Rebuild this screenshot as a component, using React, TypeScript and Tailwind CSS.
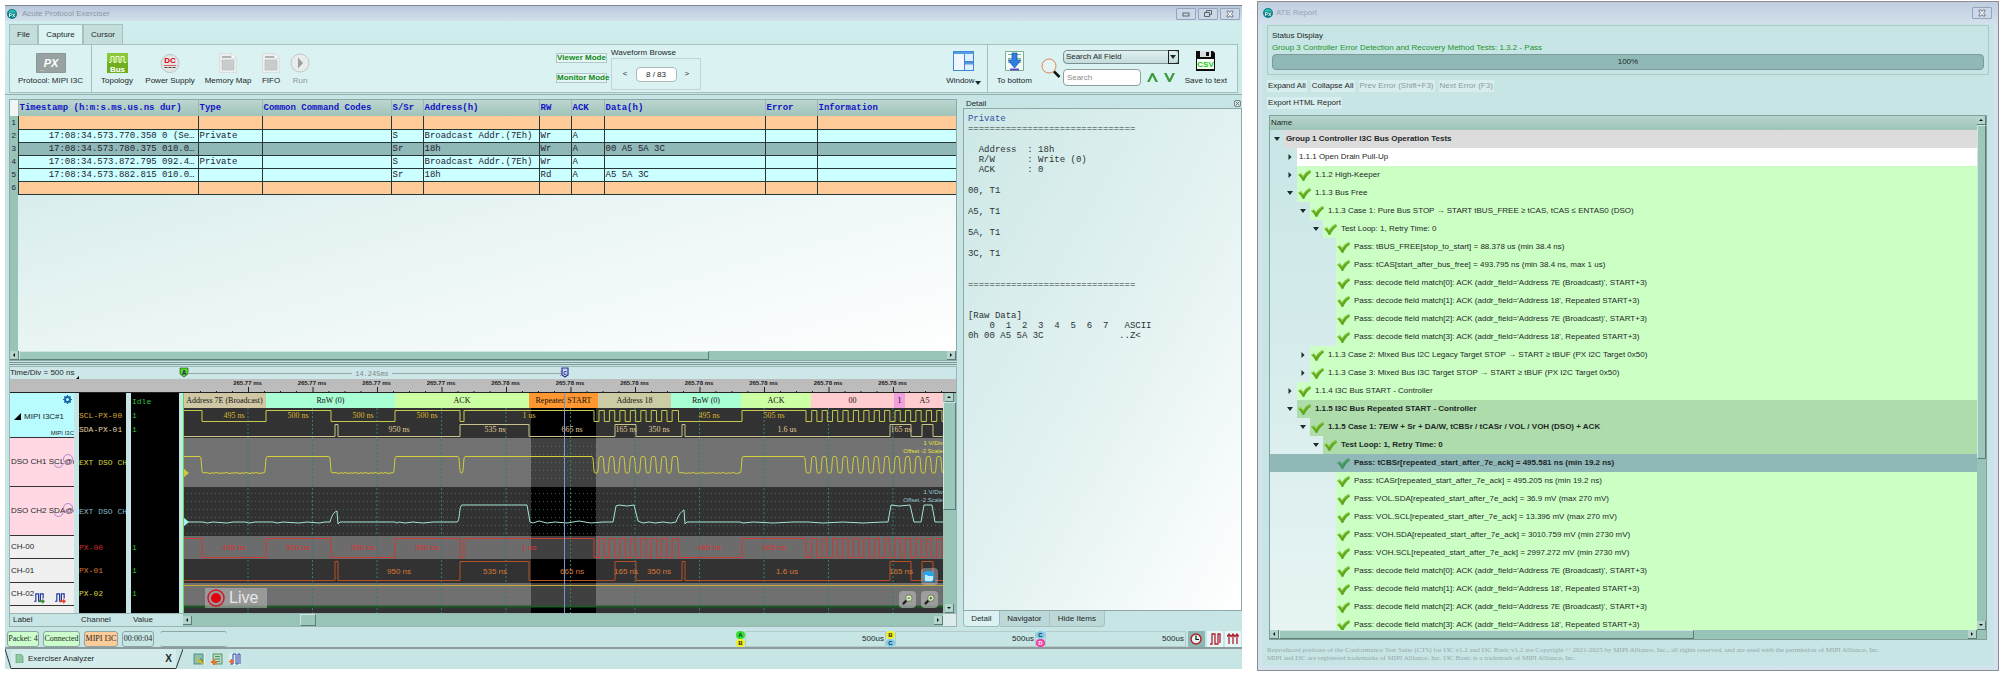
import React, { useState } from "react";

type Edge = [number, number];

const times = (n: number) => Array.from({ length: n }, (_, i) => i);

/* ---------- packet list ---------- */

const columns = [
  { name: "Timestamp (h:m:s.ms.us.ns dur)", width: "w-[180px]" },
  { name: "Type", width: "w-16" },
  { name: "Common Command Codes", width: "w-[129px]" },
  { name: "S/Sr", width: "w-8" },
  { name: "Address(h)", width: "w-[116px]" },
  { name: "RW", width: "w-8" },
  { name: "ACK", width: "w-[33px]" },
  { name: "Data(h)", width: "w-[161px]" },
  { name: "Error", width: "w-[52px]" },
  { name: "Information", width: "" },
];

const packets = [
  { bg: "bg-[#ffcc99]", cells: ["", "", "", "", "", "", "", "", "", ""] },
  {
    bg: "bg-[#ccffff]",
    cells: ["17:08:34.573.770.350 0 (Se…", "Private", "", "S", "Broadcast Addr.(7Eh)", "Wr", "A", "", "", ""],
  },
  {
    bg: "bg-[#90b8b6]",
    cells: ["17:08:34.573.780.375 010.0…", "", "", "Sr", "18h", "Wr", "A", "00 A5 5A 3C", "", ""],
  },
  {
    bg: "bg-[#ccffff]",
    cells: ["17:08:34.573.872.795 092.4…", "Private", "", "S", "Broadcast Addr.(7Eh)", "Wr", "A", "", "", ""],
  },
  {
    bg: "bg-[#ccffff]",
    cells: ["17:08:34.573.882.815 010.0…", "", "", "Sr", "18h", "Rd", "A", "A5 5A 3C", "", ""],
  },
  { bg: "bg-[#ffcc99]", cells: ["", "", "", "", "", "", "", "", "", ""] },
];

/* ---------- test report ---------- */

const indents = ["pl-0", "pl-[13px]", "pl-[26px]", "pl-[39px]", "pl-[52px]"];

type TestRow = {
  level: number;
  text: string;
  open?: boolean;
  kind?: "group" | "plain" | "bold" | "selected";
};

const decodeRows: TestRow[] = [
  { level: 4, text: "Pass: decode field match[0]: ACK (addr_field='Address 7E (Broadcast)', START+3)" },
  { level: 4, text: "Pass: decode field match[1]: ACK (addr_field='Address 18', Repeated START+3)" },
  { level: 4, text: "Pass: decode field match[2]: ACK (addr_field='Address 7E (Broadcast)', START+3)" },
  { level: 4, text: "Pass: decode field match[3]: ACK (addr_field='Address 18', Repeated START+3)" },
];

const tests: TestRow[] = [
  { level: 0, open: true, kind: "group", text: "Group 1 Controller I3C Bus Operation Tests" },
  { level: 1, open: false, kind: "plain", text: "1.1.1 Open Drain Pull-Up" },
  { level: 1, open: false, text: "1.1.2 High-Keeper" },
  { level: 1, open: true, text: "1.1.3 Bus Free" },
  { level: 2, open: true, text: "1.1.3 Case 1: Pure Bus STOP → START tBUS_FREE ≥ tCAS, tCAS ≤ ENTAS0 (DSO)" },
  { level: 3, open: true, text: "Test Loop: 1, Retry Time: 0" },
  { level: 4, text: "Pass: tBUS_FREE[stop_to_start] = 88.378 us (min 38.4 ns)" },
  { level: 4, text: "Pass: tCAS[start_after_bus_free] = 493.795 ns (min 38.4 ns, max 1 us)" },
  ...decodeRows,
  { level: 2, open: false, text: "1.1.3 Case 2: Mixed Bus I2C Legacy Target STOP → START ≥ tBUF (PX I2C Target 0x50)" },
  { level: 2, open: false, text: "1.1.3 Case 3: Mixed Bus I3C Target STOP → START ≥ tBUF (PX I2C Target 0x50)" },
  { level: 1, open: false, text: "1.1.4 I3C Bus START - Controller" },
  { level: 1, open: true, kind: "bold", text: "1.1.5 I3C Bus Repeated START - Controller" },
  { level: 2, open: true, kind: "bold", text: "1.1.5 Case 1: 7E/W + Sr + DA/W, tCBSr / tCASr / VOL / VOH (DSO) + ACK" },
  { level: 3, open: true, kind: "bold", text: "Test Loop: 1, Retry Time: 0" },
  { level: 4, kind: "selected", text: "Pass: tCBSr[repeated_start_after_7e_ack] = 495.581 ns (min 19.2 ns)" },
  { level: 4, text: "Pass: tCASr[repeated_start_after_7e_ack] = 495.205 ns (min 19.2 ns)" },
  { level: 4, text: "Pass: VOL.SDA[repeated_start_after_7e_ack] = 36.9 mV (max 270 mV)" },
  { level: 4, text: "Pass: VOL.SCL[repeated_start_after_7e_ack] = 13.396 mV (max 270 mV)" },
  { level: 4, text: "Pass: VOH.SDA[repeated_start_after_7e_ack] = 3010.759 mV (min 2730 mV)" },
  { level: 4, text: "Pass: VOH.SCL[repeated_start_after_7e_ack] = 2997.272 mV (min 2730 mV)" },
  ...decodeRows,
];

/* ---------- waveform data, x in pixels from cursor A ---------- */

const scl: Edge[] = [
  [0, 1], [19, 0], [83, 1], [148, 0], [212, 1], [277, 0], [281, 1], [411, 0],
  ...times(8).flatMap((i): Edge[] => [
    [416 + i * 10.45, 1],
    [i === 7 ? 495.5 : 421.3 + i * 10.45, 0],
  ]),
  [559, 1], [623, 0],
  ...times(13).flatMap((i): Edge[] => [
    [628.7 + i * 10.42, 1],
    [633.9 + i * 10.42, 0],
  ]),
];

const sda: Edge[] = [
  [0, 0], [152, 1], [155, 0], [277, 1], [346, 0], [432, 1], [453, 0],
  [499, 1], [502, 0], [707, 1], [728, 0], [739, 1], [750, 0],
];

const segments = [
  { x: 0, w: 83, text: "Address 7E (Broadcast)", fill: "#d0c8a4" },
  { x: 83, w: 129, text: "RnW (0)", fill: "#a8ffd4" },
  { x: 212, w: 134, text: "ACK", fill: "#ccffa4" },
  { x: 346, w: 69, text: "Repeated START", fill: "#ff9830" },
  { x: 415, w: 73, text: "Address 18", fill: "#cccca4" },
  { x: 488, w: 70, text: "RnW (0)", fill: "#a8ffd4" },
  { x: 558, w: 70, text: "ACK", fill: "#ccffa4" },
  { x: 628, w: 83, text: "00", fill: "#ffcccf" },
  { x: 711, w: 11, text: "1", fill: "#f0a0dc" },
  { x: 722, w: 39, text: "A5", fill: "#ffcccf" },
];

const sclLabels: [number, string][] = [
  [51, "495 ns"], [115, "500 ns"], [180, "500 ns"], [244, "500 ns"],
  [346, "1 us"], [526, "495 ns"], [591, "505 ns"],
];

const sdaLabels: [number, string][] = [
  [216, "950 ns"], [312, "535 ns"], [389, "665 ns"], [443, "165 ns"],
  [476, "350 ns"], [604, "1.6 us"], [718, "165 ns"],
];

const ticks = ["265.77 ms", "265.77 ms", "265.77 ms", "265.77 ms", "265.78 ms", "265.78 ms",
  "265.78 ms", "265.78 ms", "265.78 ms", "265.78 ms", "265.78 ms"];

function digital(edges: Edge[], hi: number, lo: number) {
  const y = (v: number) => (v ? hi : lo);
  return `M0 ${y(edges[0][1])}` + edges.slice(1).map(([x, v]) => `H${x}V${y(v)}`).join("") + "H2000";
}

function analog(edges: Edge[], hi: number, lo: number) {
  const y = (v: number) => (v ? hi : lo);
  let d = `M0 ${y(edges[0][1])}`;
  edges.forEach(([x, v], i) => {
    const end = edges[i + 1] ? edges[i + 1][0] - 2 : 2000;
    if (i > 0) {
      d += `L${x - 2} ${y(edges[i - 1][1])}C${x} ${y(edges[i - 1][1])} ${x - 1} ${y(v)} ${x + 1} ${y(v)}`;
    }
    // a little ripple on the low level
    if (!v) {
      for (let n = x + 4, k = 0; n < Math.min(end, 770); n += 2, k++) {
        d += `L${n} ${lo + (((k * 7) % 5) - 2) * 0.25}`;
      }
    }
  });
  return d + "H2000";
}

const sdaAnalog =
  "M0 129L20 129L24 130L30 129L44 130L50 129L62 129L66 130L72 129L90 129L94 130L100 129L116 130L124 129L136 130L142 129" +
  "L147 129C149 122 151 119 154 118L155 131L157 129H212L214 130L216 129L222 130L230 129L240 130L250 129H274" +
  "C277 129 276 112 279 112H344L347 129L350 130L356 128L364 130L372 129L384 130L396 128L408 130L420 129H430" +
  "L433 113L436 112L444 113L451 112L455 128L460 130L466 129L472 130L480 129L488 130L493 129C496 121 498 119 501 117" +
  "L502 131L504 129H557L560 130L570 129L590 130L610 129L625 129L640 130L660 129L680 130L700 129H705L708 112L716 113L727 112" +
  "L731 129L738 129L741 112L749 112L752 129H2000";

function Waveform() {
  return (
    <svg className="block h-[220px] w-full bg-[#323232]" fontSize="8" textAnchor="middle">
      <rect y="45" width="100%" height="49" fill="#727272" />
      <rect y="143" width="100%" height="23" fill="#6c6c6c" />
      <rect y="190" width="100%" height="23" fill="#707070" />
      <g>
        <rect x="348" y="15" width="65" height="205" fill="#000" />
        <rect x="348" y="45" width="65" height="49" fill="#404040" />
        <rect x="348" y="143" width="65" height="23" fill="#404040" />
        <rect x="348" y="190" width="65" height="23" fill="#404040" />
      </g>
      {/* grid */}
      <g stroke="#4e7a78" strokeDasharray="1 3">
        {[53, 61, 69, 77, 85].map((y) => (
          <line key={y} x1="0" x2="100%" y1={y + 0.5} y2={y + 0.5} strokeOpacity=".7" />
        ))}
        {[100, 108, 116, 124, 132, 140].map((y) => (
          <line key={y} x1="0" x2="100%" y1={y + 0.5} y2={y + 0.5} strokeOpacity=".7" />
        ))}
      </g>
      <g stroke="#2c7f78" strokeDasharray="2 2">
        {ticks.map((_, i) => (
          <line key={i} x1={65 + i * 64.5} x2={65 + i * 64.5} y1="15" y2="220" />
        ))}
      </g>
      {/* decoded fields */}
      <rect width="100%" height="15" fill="#ffcccf" />
      {segments.map((s) => (
        <g key={s.x} fontFamily="Liberation Serif, serif">
          <rect x={s.x} width={s.w} height="15" fill={s.fill} />
          <path d={`M${s.x + s.w + 0.5} 0v3M${s.x + s.w + 0.5} 11v4`} stroke="#111" />
          <text x={s.x + s.w / 2} y="10" fill="#111">
            {s.text}
          </text>
        </g>
      ))}
      <g fill="none" strokeWidth="1">
        <path d={digital(scl, 17.5, 28.5)} stroke="#c8c850" />
        <path d={digital(sda, 31.5, 43.5)} stroke="#c8c48c" />
        <path d={analog(scl, 63.5, 80)} stroke="#d4d03c" />
        <path d={sdaAnalog} stroke="#a4e4d8" />
        <path d={digital(scl, 145.5, 164.5)} stroke="#cc3a34" />
        <path d={digital(sda, 168.5, 187.5)} stroke="#b85028" />
        <path d="M0 192.5H2000" stroke="#c8a830" />
        <path d="M0 213.5H2000" stroke="#1c5a24" strokeWidth="2" />
      </g>
      <g fontFamily="Liberation Serif, serif">
        {sclLabels.map(([x, t]) => (
          <text key={x} x={x} y="25" fill="#dcb82c">{t}</text>
        ))}
        {sdaLabels.map(([x, t]) => (
          <text key={x} x={x} y="39" fill="#e0cc98">{t}</text>
        ))}
      </g>
      <g fontFamily="Liberation Sans, sans-serif">
        {sclLabels.map(([x, t]) => (
          <text key={x} x={x} y="157" fill="#dc3034">{t}</text>
        ))}
        {sdaLabels.map(([x, t]) => (
          <text key={x} x={x} y="181" fill="#dc7834">{t}</text>
        ))}
      </g>
      <g fontFamily="Liberation Sans, sans-serif" fontSize="6" textAnchor="end">
        <text x="100%" y="52" fill="#e4e03c">1 V/Div</text>
        <text x="100%" y="60" fill="#e4e03c">Offset -2 Scale</text>
        <text x="100%" y="101" fill="#9cccd4">1 V/Div</text>
        <text x="100%" y="109" fill="#9cccd4">Offset -2 Scale</text>
      </g>
      <path d="M0 75l6 5l-6 5z" fill="#d0c838" />
      <path d="M0 124l6 5l-6 5z" fill="#a4f0e4" />
      <path d="M.5 0V220" stroke="#50e050" />
      <path d="M381.5 0V220" stroke="#6c9cd0" />
    </svg>
  );
}

/* ---------- icons ---------- */

const AppLogo = () => (
  <svg className="size-[10px] shrink-0" viewBox="0 0 10 10">
    <circle cx="5" cy="5" r="5" fill="#0b7f86" />
    <path d="M1 3.5A4.4 4.4 0 0 1 9 3.5Z" fill="#2cc4b4" />
    <path d="M2.5 8V4.5h1.2a1 1 0 0 1 0 2H2.6M5.5 8l2.5-3.500M5.8 4.500L7.6 8" stroke="#fff" strokeWidth=".8" fill="none" />
  </svg>
);

const PxIcon = () => (
  <svg className="h-5 w-[30px]" viewBox="0 0 30 20">
    <rect width="30" height="20" rx="1" fill="#8d9899" />
    <rect x="1" y="1" width="28" height="18" fill="#98a2a3" />
    <text x="15" y="14" fontSize="11" fontStyle="italic" fontWeight="bold" fill="#fff" textAnchor="middle" fontFamily="Liberation Sans, sans-serif">PX</text>
    <path d="M4 17.500h4" stroke="#d0d090" strokeWidth=".6" />
  </svg>
);

const BusIcon = () => (
  <svg className="h-5 w-[21px]" viewBox="0 0 21 20">
    <rect width="21" height="20" fill="#6fae1e" />
    <rect width="21" height="9" fill="#8cc63a" />
    <path d="M2 9.500h2V3.500h3v6h2V3.500h3v6h2V3.500h3v6h2.500" fill="none" stroke="#f0ffd8" />
    <text x="10.5" y="18.500" fontSize="8" fontWeight="bold" fill="#fff" textAnchor="middle" fontFamily="Liberation Sans, sans-serif">Bus</text>
  </svg>
);

const PowerIcon = () => (
  <svg className="size-5" viewBox="0 0 20 20">
    <circle cx="10" cy="10.500" r="9" fill="#e4e6e6" stroke="#b9c4c4" />
    <text x="10" y="10" fontSize="8" fontWeight="bold" fill="#e00010" textAnchor="middle" fontFamily="Liberation Sans, sans-serif">DC</text>
    <path d="M3.500 12.500h13" stroke="#e06060" />
    <path d="M4.500 14.500h11" stroke="#444" strokeDasharray="3 1" />
  </svg>
);

const PageIcon = () => (
  <svg className="size-5" viewBox="0 0 20 20">
    <path d="M1.500 .5h12l5 4.500v14.500h-17z" fill="#eef0f0" stroke="#dadede" />
    <path d="M13.500 .5v4.500h5z" fill="#fff" stroke="#d0d4d4" strokeWidth=".6" />
    <path d="M4 4h9" stroke="#9aa0a0" strokeWidth="1.500" />
    <rect x="4" y="7" width="12" height="10" fill="#c8cccc" stroke="#b8bcbc" strokeWidth=".6" />
  </svg>
);

const RunIcon = () => (
  <svg className="size-5" viewBox="0 0 20 20">
    <circle cx="10" cy="10" r="9" fill="#e9ecec" stroke="#c0c6c6" />
    <path d="M8 4.500l5 5.500l-5 5.500z" fill="#9a9e9e" />
  </svg>
);

const WindowIcon = () => (
  <svg className="h-5 w-[21px]" viewBox="0 0 21 20">
    <rect x=".5" y=".5" width="11" height="19" fill="#eef6ff" stroke="#3f86d6" />
    <rect x="11.500" y=".5" width="9" height="10" fill="#e0efff" stroke="#3f86d6" />
    <rect x="11.500" y="11.500" width="9" height="8" fill="#e0efff" stroke="#3f86d6" />
    <path d="M1 2h19M12 12.500h8" stroke="#5a9ce4" strokeWidth="2" />
  </svg>
);

const BottomIcon = () => (
  <svg className="h-5 w-[19px]" viewBox="0 0 19 20">
    <path d="M.5 .5v19h18V.5z" fill="#f6fbfb" stroke="#7ab08c" />
    <path d="M3 3.500h13M3 7.500h13M3 11.500h13" stroke="#7ab08c" />
    <path d="M7 2h5v7h4l-6.500 8L3 9h4z" fill="#2f7fe0" stroke="#1a55a8" strokeWidth=".7" />
    <path d="M5 18.500h9" stroke="#5a4cc0" strokeWidth="2" />
  </svg>
);

const MagnifierIcon = () => (
  <svg className="size-5" viewBox="0 0 20 20">
    <circle cx="8" cy="8" r="7" fill="#e4f4f2" stroke="#e08458" />
    <path d="M13 13.500l5.500 5.500" stroke="#111" strokeWidth="2.500" />
  </svg>
);

const SaveIcon = () => (
  <svg className="h-5 w-[19px]" viewBox="0 0 19 20">
    <path d="M0 0h17l2 2v18H0z" fill="#0c0c0c" />
    <rect x="4" y="0" width="11" height="6" fill="#d8dede" />
    <rect x="10" y="1" width="3" height="4" fill="#0c0c0c" />
    <rect x="1" y="8" width="17" height="10" fill="#f2fff2" />
    <text x="9.500" y="16" fontSize="8" fontWeight="bold" fill="#1cc81c" textAnchor="middle" fontFamily="Liberation Sans, sans-serif">CSV</text>
  </svg>
);

const Check = ({ dim }: { dim?: boolean }) => (
  <svg className="h-[11px] w-[13px] shrink-0" viewBox="0 0 13 11">
    <path d="M0 4.800L3 3.200L5 6C7 3 9 1 12 0L13 2.600C10 4.500 8 7 6.200 11H4.800C3.500 8.500 2 6.500 0 4.800Z" fill={dim ? "#3f9460" : "#5ea81e"} />
    <path d="M.8 4.800L2.900 3.800L5 6.800C7 4 9 2 11.800 .8" stroke={dim ? "#5fae7c" : "#9ed84c"} fill="none" />
  </svg>
);

const Caret = ({ open }: { open: boolean }) => (
  <svg className="size-[6px]" viewBox="0 0 6 6">
    <path d={open ? "M0 1h6L3 5z" : "M1.500 0v6l3-3z"} fill="#1c2c2c" />
  </svg>
);

const PulseIcon = ({ color }: { color: string }) => (
  <svg className="size-3" viewBox="0 0 12 12">
    <path d="M1 11h2V1h3v10h3V1h2v9" fill="none" stroke={color} strokeWidth="1.300" />
  </svg>
);

// pulse with a small coloured marker in the corner
const MarkedPulseIcon = ({ mark }: { mark: string }) => (
  <svg className="size-[11px]" viewBox="0 0 12 12">
    <path d="M0 9h2V1h3v8h2V1h3v5" fill="none" stroke="#2438a0" strokeWidth="1.300" />
    <path d="M5 8h4V6l3 3l-3 3v-2H5z" fill={mark} />
  </svg>
);

/* ---------- small parts ---------- */

const Tool = ({ icon, label, className }: { icon: React.ReactNode; label: string; className: string }) => (
  <button className={`flex h-full shrink-0 flex-col items-center gap-[3px] pt-2 leading-[10px] whitespace-nowrap ${className}`}>
    {icon}
    {label}
  </button>
);

const ScrollArrow = ({ dir }: { dir: "up" | "down" | "left" | "right" }) => {
  const d = {
    up: "M1 4h4L3 2z",
    down: "M1 2h4L3 4z",
    left: "M4 1v4L2 3z",
    right: "M2 1v4L4 3z",
  }[dir];
  return (
    <button
      aria-label={`Scroll ${dir}`}
      className="flex size-[9px] shrink-0 items-center justify-center border-r border-b border-[#5c7c78] bg-[#b4d4cc]"
    >
      <svg className="size-[6px]" viewBox="0 0 6 6"><path d={d} fill="#111" /></svg>
    </button>
  );
};

const thumb = "border border-t-[#cfe6e2] border-l-[#cfe6e2] border-r-[#5c7c78] border-b-[#5c7c78] bg-[#9cc8bc]";

const WindowButton = ({ label, children }: { label: string; children: React.ReactNode }) => (
  <button aria-label={label} className="flex h-3 w-5 items-center justify-center rounded-[1px] border border-[#94a4bc] bg-[#ccd8e8]">
    <svg className="size-2" viewBox="0 0 8 8" fill="none" stroke="#5c6470" strokeWidth="1">{children}</svg>
  </button>
);

const closeGlyph = (
  <path d="M1 1h2l1 1.500L5 1h2v1L5.500 4L7 6v1H5L4 5.500L3 7H1V6L2.500 4L1 2z" strokeWidth=".8" fill="#f4f8fc" />
);

const Measure = ({ a, b, ca, cb }: { a: string; b: string; ca: string; cb: string }) => (
  <div className="flex">
    <div className="flex w-[9px] flex-col text-center text-[6px] leading-[8px] font-bold">
      <span className={`rounded-sm ${ca}`}>{a}</span>
      <span className={`rounded-sm ${cb}`}>{b}</span>
    </div>
    <div className="flex h-4 w-[141px] items-center justify-end border border-[#b4cccc] pr-px">500us</div>
  </div>
);

/* ---------- analyzer window ---------- */

function Toolbar() {
  const [page, setPage] = useState("8 / 83");
  return (
    <div className="mx-1 flex h-[49px] items-start border border-[#a4c0c0] bg-[#daf2f2]">
      <Tool icon={<PxIcon />} label="Protocol: MIPI I3C" className="w-[82px] border-r border-[#a4c0c0]" />
      <Tool icon={<BusIcon />} label="Topology" className="w-[50px]" />
      <Tool icon={<PowerIcon />} label="Power Supply" className="w-14" />
      <Tool icon={<PageIcon />} label="Memory Map" className="w-[60px]" />
      <Tool icon={<PageIcon />} label="FIFO" className="w-[26px]" />
      <Tool icon={<RunIcon />} label="Run" className="w-8 text-[#8a9696]" />

      <div className="ml-[240px] flex flex-col gap-[10px] pt-2">
        <button className="h-[10px] w-[51px] border border-[#b0c8c8] bg-[#e6f6f4] leading-[8px] font-bold whitespace-nowrap text-[#108820]">Viewer Mode</button>
        <button className="h-[10px] w-[51px] border border-[#b0c8c8] bg-[#e6f6f4] leading-[8px] font-bold whitespace-nowrap text-[#108820]">Monitor Mode</button>
      </div>
      <fieldset className="ml-1 w-[90px]">
        <legend className="pt-[3px] leading-[10px]">Waveform Browse</legend>
        <div className="flex h-8 items-center justify-center gap-2 border border-[#c0d6d6]">
          <button aria-label="Previous waveform">&lt;</button>
          <input
            aria-label="Waveform page"
            value={page}
            onChange={(e) => setPage(e.target.value)}
            className="h-[15px] w-[41px] rounded-sm border border-[#a8bcbc] bg-white text-center"
          />
          <button aria-label="Next waveform">&gt;</button>
        </div>
      </fieldset>

      <div className="ml-auto flex h-full items-start">
        <div className="flex h-full w-12 border-r border-[#a4c0c0]">
          <button className="flex w-full flex-col items-center gap-[5px] pt-[6px] leading-[10px]">
            <WindowIcon />
            <span className="flex items-end">Window<Caret open /></span>
          </button>
        </div>
        <button className="flex w-[53px] flex-col items-center gap-[5px] pt-[6px] leading-[10px]">
          <BottomIcon />
          To bottom
        </button>
        <div className="pt-[13px]"><MagnifierIcon /></div>
        <div className="ml-[2px] flex w-[116px] flex-col gap-[5px] pt-[5px]">
          <div className="relative">
            <select aria-label="Search field" className="h-[14px] w-full appearance-none rounded-sm border border-[#7c9090] bg-linear-to-b from-[#e0f0f0] to-[#c4dcdc] pl-[2px] leading-[12px]">
              <option>Search All Field</option>
            </select>
            <span className="pointer-events-none absolute top-0 right-0 flex h-[14px] w-[11px] items-center justify-center border border-[#222]">
              <Caret open />
            </span>
          </div>
          <div className="flex items-center gap-[6px]">
            <input aria-label="Search" placeholder="Search" className="h-[17px] w-[78px] rounded-sm border border-[#8ca0a0] bg-white pl-[3px] placeholder:text-[#8c8c8c]" />
            <button aria-label="Find previous">
              <svg className="h-[9px] w-[11px]" viewBox="0 0 11 9"><path d="M0 9L4.500 0h2L11 9H8.500L5.500 3L2.500 9z" fill="#3c9c3c" /></svg>
            </button>
            <button aria-label="Find next">
              <svg className="h-[9px] w-[11px]" viewBox="0 0 11 9"><path d="M0 0h2.500l3 6l3-6H11L6.500 9h-2z" fill="#3c9c3c" /></svg>
            </button>
          </div>
        </div>
        <button className="mr-1 flex w-[54px] flex-col items-center gap-[5px] pt-[6px] leading-[10px] whitespace-nowrap">
          <SaveIcon />
          Save to text
        </button>
      </div>
    </div>
  );
}

function PacketTable() {
  return (
    <div className="border border-[#8ca8a8] bg-linear-to-br from-[#cfe8e8] via-[#eaf5f5] to-white">
      <div className="flex h-[251px] bg-linear-to-r from-[#98c4b8] from-[8px] to-transparent to-[8px]">
        <table className="w-full table-fixed self-start border-collapse font-['Liberation_Mono',monospace] text-[9px] leading-[11px] text-[#223]">
          <thead>
            <tr className="h-4 bg-linear-to-b from-[#bcd6cf] to-[#a0c4ba] text-left text-[#1414c8]">
              <th className="w-2 bg-[#f0f4f4] p-0" />
              {columns.map((c) => (
                <th key={c.name} className={`truncate border-l border-[#98b8b0] p-0 pl-px font-bold ${c.width}`}>{c.name}</th>
              ))}
            </tr>
          </thead>
          <tbody>
            {packets.map((p, row) => (
              <tr key={row} className={`h-[13px] ${p.bg}`}>
                <th className="bg-[#98c4b8] p-0 text-center font-['Liberation_Sans',sans-serif] text-[8px] leading-[12px] font-normal">{row + 1}</th>
                {p.cells.map((c, i) => (
                  <td
                    key={i}
                    className={`overflow-hidden border-b border-l border-[#243838] p-0 leading-[12px] whitespace-nowrap ${i === 0 ? "pr-[3px] text-right" : "pl-px"}`}
                  >
                    {c}
                  </td>
                ))}
              </tr>
            ))}
          </tbody>
        </table>
      </div>
      <div className="flex h-[9px] bg-[#98c4b8]">
        <ScrollArrow dir="left" />
        <div className={`w-[73%] ${thumb}`} />
        <div className="ml-auto"><ScrollArrow dir="right" /></div>
      </div>
    </div>
  );
}

const lanes = [
  { label: "DSO CH1 SCL@c", channel: "EXT DSO CH", color: "text-[#d8d43c]" },
  { label: "DSO CH2 SDA@c", channel: "EXT DSO CH", color: "text-[#88b8c8]" },
];

const pins = [
  { label: "CH-00", channel: "PX-00", color: "text-[#cc2c2c]" },
  { label: "CH-01", channel: "PX-01", color: "text-[#d87434]" },
  { label: "CH-02", channel: "PX-02", color: "text-[#d8d43c]" },
];

function WavePanel() {
  return (
    <div className="mt-px border border-[#9cb4b4]">
      <div className="flex h-3 bg-[#cde6e8]">
        <div className="flex w-[69px] shrink-0 items-center justify-between">
          Time/Div = 500 ns
          <svg className="mt-2 size-[3px]" viewBox="0 0 3 3"><path d="M3 0v3H0z" /></svg>
        </div>
        <svg className="ml-[100px] h-3 min-w-0 flex-1" fontFamily="Liberation Mono, monospace">
          <path d="M10 6.500H173M213 6.500H384M381 4l3 2.500l-3 2.500" stroke="#94a8a8" fill="none" />
          <text x="193" y="9" fontSize="7" fill="#7c8888" textAnchor="middle">14.245ms</text>
          <path d="M1 1h8v6L5 10L1 7z" fill="#50dc20" stroke="#283c10" strokeWidth=".6" />
          <text x="5" y="8" fontSize="7" fontWeight="bold" textAnchor="middle" fill="#302070">A</text>
          <path d="M383 1h6v7l-3 2l-3-2z" fill="#c4d4f4" stroke="#2c3890" strokeWidth="1.200" />
          <text x="386" y="8" fontSize="6" fontWeight="bold" textAnchor="middle" fill="#2c3890">C</text>
        </svg>
      </div>
      <svg className="block h-[14px] w-full bg-[#bcbcbc]" fontFamily="Liberation Sans, sans-serif" fontSize="6">
        {ticks.map((t, i) => (
          <g key={i}>
            <text x={237.500 + i * 64.500} y="6" textAnchor="middle" fontWeight="bold" fill="#222">{t}</text>
            <path d={`M${238.500 + i * 64.500} 8v6m16 -2v2m16 -2v2m16 -2v2`} stroke="#222" />
          </g>
        ))}
        <path d="M190.500 12v2m16 -2v2m16 -2v2M0 13.500H2000" stroke="#222" />
      </svg>

      <div className="flex h-[220px] font-['Liberation_Mono',monospace]">
        <div className="w-16 shrink-0 overflow-hidden bg-[#f0f0f0] font-['Liberation_Sans',sans-serif] whitespace-nowrap">
          <div className="flex h-[45px] flex-col items-end justify-between border-b border-[#333] bg-[#b8fcff] pt-[2px]">
            <svg className="mr-[2px] size-[9px]" viewBox="0 0 9 9">
              <circle cx="4.500" cy="4.500" r="2.500" fill="none" stroke="#1c64a8" strokeWidth="2" />
              <path d="M4.500 0v9M0 4.500h9M1.300 1.300l6.400 6.400M7.700 1.300l-6.400 6.400" stroke="#1c64a8" strokeWidth="1.200" strokeDasharray="2 5" />
            </svg>
            <div className="flex w-full items-center gap-[3px] pl-1">
              <svg className="size-[7px]" viewBox="0 0 7 7"><path d="M7 0v7H0z" /></svg>
              MIPI I3C#1
            </div>
            <span className="text-[6px] leading-[8px]">MIPI I3C</span>
          </div>
          {lanes.map((l) => (
            <div key={l.label} className="relative flex h-[49px] items-center border-b border-[#333] bg-[#ffd8e4] pl-px">
              {l.label}
              <svg className="absolute right-0 h-4 w-5" viewBox="0 0 20 16" fill="none" stroke="#a888cc">
                <circle cx="14" cy="5" r="4.500" />
                <path d="M0 9a4.500 4.500 0 0 0 9 0" />
              </svg>
            </div>
          ))}
          {pins.map((p, i) => (
            <div key={p.label} className={`flex items-center border-b border-[#333] pl-px ${i === 1 ? "h-6" : "h-[23px]"}`}>
              {p.label}
              {i === 2 && (
                <span className="mt-2 flex gap-[10px]">
                  <MarkedPulseIcon mark="#3c8c3c" />
                  <MarkedPulseIcon mark="#e04830" />
                </span>
              )}
            </div>
          ))}
        </div>
        <div className="ml-[5px] w-[47px] shrink-0 overflow-hidden bg-black whitespace-nowrap">
          <div className="flex h-[45px] flex-col justify-end gap-[4px] pb-[3px] leading-[10px]">
            <span className="text-[#d8a838]">SCL-PX-00</span>
            <span className="text-[#e0d0a0]">SDA-PX-01</span>
          </div>
          {lanes.map((l) => (
            <div key={l.label} className={`flex h-[49px] items-center ${l.color}`}>{l.channel}</div>
          ))}
          {pins.map((p) => (
            <div key={p.label} className={`flex h-[23px] items-center ${p.color}`}>{p.channel}</div>
          ))}
        </div>
        <div className="ml-[5px] w-12 shrink-0 bg-black pl-px text-[#2cc83c]">
          <div className="flex h-[143px] flex-col gap-[4px] pt-[4px] leading-[10px]">
            <span>Idle</span>
            <span>1</span>
            <span>1</span>
          </div>
          {pins.map((p) => (
            <div key={p.label} className="flex h-[23px] items-center">1</div>
          ))}
        </div>
        <div className="relative ml-1 min-w-0 flex-1">
          <Waveform />
          <div className="absolute top-[195px] left-[22px] flex h-5 w-[62px] items-center gap-1 bg-[#b4b4b4]/60 pl-[2px] font-['Liberation_Sans',sans-serif] text-[16px] text-[#e8e8e8]">
            <svg className="size-[18px]" viewBox="0 0 18 18">
              <circle cx="9" cy="9" r="8" fill="none" stroke="#d01828" strokeWidth="1.500" />
              <circle cx="9" cy="9" r="5" fill="#e00010" />
            </svg>
            Live
          </div>
          <button aria-label="Notes" className="absolute right-[5px] bottom-[28px] flex size-[17px] items-center justify-center rounded-sm bg-white/30">
            <svg className="size-[14px]" viewBox="0 0 14 14">
              <rect x="1" y="1" width="11" height="11" rx="4" fill="#2ca4ec" />
              <path d="M3 5h2l1 1h5v5H3z" fill="#c4ecff" />
              <path d="M10 11l3 2V9z" fill="#1470b8" />
            </svg>
          </button>
          <div className="absolute right-[5px] bottom-[5px] flex gap-[5px]">
            {["out", "in"].map((z) => (
              <button key={z} aria-label={`Zoom ${z}`} className="flex size-[17px] items-center justify-center rounded-sm bg-[#b0b0b0]/70">
                <svg className="size-[11px]" viewBox="0 0 12 12">
                  <path d="M1 11l4-4" stroke="#222" strokeWidth="2.500" />
                  <circle cx="7.500" cy="4.500" r="3.500" fill="#e4f4c8" stroke="#607848" />
                  <path d={z === "in" ? "M6 4.500h3M7.500 3v3" : "M6 4.500h3"} stroke="#304820" />
                </svg>
              </button>
            ))}
          </div>
        </div>
        <div className="flex w-[13px] shrink-0 flex-col items-center bg-[#98c4b8]">
          <ScrollArrow dir="up" />
          <div className={`h-[108px] w-full ${thumb}`} />
          <div className="mt-auto"><ScrollArrow dir="down" /></div>
        </div>
      </div>

      <div className="flex h-[13px] items-center border-t border-[#9cb4b4]">
        <div className="w-[69px] shrink-0 pl-[3px]">Label</div>
        <div className="w-[52px] shrink-0 pl-[2px]">Channel</div>
        <div className="w-[52px] shrink-0 pl-[2px]">Value</div>
        <div className="flex h-full flex-1 items-center bg-[#98c4b8]">
          <ScrollArrow dir="left" />
          <div className={`ml-[108px] h-full w-4 ${thumb}`} />
          <div className="ml-auto"><ScrollArrow dir="right" /></div>
        </div>
        <div className="h-full w-[13px] shrink-0 bg-[#dcecec]" />
      </div>
    </div>
  );
}

function DetailPanel() {
  return (
    <div className="flex w-[279px] shrink-0 flex-col">
      <div className="flex h-[9px] items-center justify-between pr-px pl-[3px]">
        Detail
        <button aria-label="Close detail">
          <svg className="block size-[7px]" viewBox="0 0 8 8" fill="#dce8e8" stroke="#5c6c6c"><rect x=".5" y=".5" width="7" height="7" rx="2" /><path d="M2 2l4 4M6 2L2 6" /></svg>
        </button>
      </div>
      <div className="flex h-[503px] flex-col gap-[11px] border border-[#90a8a8] bg-linear-to-br from-[#cde8e6] via-[#e2f1f1] to-white px-1 pt-[5px] font-['Liberation_Mono',monospace] text-[9px] leading-[10px] text-[#2c3434]">
        <pre className="font-[inherit]"><b className="font-normal text-[#3454a4]">Private</b>{"\n==============================="}</pre>
        <pre className="font-[inherit]">{"  Address  : 18h\n  R/W      : Write (0)\n  ACK      : 0"}</pre>
        <pre className="font-[inherit]">00, T1</pre>
        <pre className="font-[inherit]">A5, T1</pre>
        <pre className="font-[inherit]">5A, T1</pre>
        <pre className="font-[inherit]">3C, T1</pre>
        <pre className="mt-[10px] font-[inherit]">===============================</pre>
        <pre className="mt-[10px] font-[inherit]">{"[Raw Data]\n    0  1  2  3  4  5  6  7   ASCII\n0h 00 A5 5A 3C              ..Z<"}</pre>
      </div>
      <div className="flex h-4">
        <button className="w-[37px] rounded-b-sm border border-t-0 border-[#a0b8b8] bg-[#dcf2f2]">Detail</button>
        <button className="w-[50px] border border-t-0 border-l-0 border-[#a8c0c0] bg-[#bcd8d8]">Navigator</button>
        <button className="w-[55px] rounded-br-sm border border-t-0 border-l-0 border-[#a8c0c0] bg-[#bcd8d8]">Hide Items</button>
      </div>
    </div>
  );
}

function StatusBar() {
  const pill = "flex h-4 items-center justify-center rounded-[3px] border border-[#8ca4a4] font-['Liberation_Serif',serif]";
  return (
    <div className="mt-1 flex h-[18px] items-center border-b-2 border-[#8c9c9c] pl-[2px]">
      <div className={`w-8 bg-[#ccffcc] ${pill}`}>Packet: 4</div>
      <div className={`ml-1 w-[37px] bg-[#ccffcc] ${pill}`}>Connected</div>
      <div className={`ml-1 w-[34px] bg-[#ffcc99] ${pill}`}>MIPI I3C</div>
      <div className={`ml-1 w-8 ${pill}`}>00:00:04</div>
      <div className="ml-[6px] h-4 w-[67px] rounded-[3px] border-t border-b border-[#8ca4a4]" />
      <div className="ml-auto flex">
        <Measure a="A" b="B" ca="bg-[#30e030]" cb="bg-[#f4f020]" />
        <Measure a="B" b="C" ca="bg-[#f4f020]" cb="bg-[#80ccec]" />
        <Measure a="C" b="D" ca="bg-[#80ccec]" cb="bg-[#f43ca0] text-white" />
      </div>
      <div className="mr-px ml-[2px] flex gap-[2px]">
        <button aria-label="Time" className="flex h-4 w-[17px] items-center justify-center bg-[#8cb8b4]">
          <svg className="size-3" viewBox="0 0 12 12"><circle cx="6" cy="6" r="5" fill="#e4f4f0" stroke="#b02030" strokeWidth="1.500" /><path d="M6 2.500v4h3" stroke="#111" strokeWidth="1.200" fill="none" /></svg>
        </button>
        <button aria-label="Pulse" className="flex size-4 items-center justify-center bg-[#e4f6f6]"><PulseIcon color="#b02030" /></button>
        <button aria-label="Edges" className="flex size-4 items-center justify-center bg-[#e4f6f6]">
          <svg className="size-3" viewBox="0 0 12 12" stroke="#b02030" strokeWidth="1.300" fill="none"><path d="M2 11V2M6 11V2M10 11V2M0 3.500L2 1l2 2.500L6 1l2 2.500L10 1l2 2.500" /></svg>
        </button>
      </div>
    </div>
  );
}

function AnalyzerWindow() {
  return (
    <section className="mt-[5px] min-w-0 self-start border-t border-[#7c8890] bg-[#c8e5e5]">
      <header className="flex h-[15px] items-center bg-linear-to-b from-[#b8c8dc] to-[#d4e0ec] pr-[2px] pl-[2px] text-[#8c98a4]">
        <AppLogo />
        <h1 className="ml-[5px]">Acute Protocol Exerciser</h1>
        <div className="ml-auto flex gap-[2px]">
          <WindowButton label="Minimize"><rect x="1" y="3" width="6" height="3" /></WindowButton>
          <WindowButton label="Restore"><path d="M2.500 2.500v-2h5v4h-2M.5 2.500h5v4h-5z" /></WindowButton>
          <WindowButton label="Close">{closeGlyph}</WindowButton>
        </div>
      </header>
      <div className="bg-linear-to-b from-[#d0eeee] to-[#cae8e8] pt-[3px]">
        <nav className="flex h-5 pl-1">
          <button className="w-[29px] border border-b-0 border-[#a8c0c0] bg-[#c4dedc]">File</button>
          <button className="w-[45px] border border-b-0 border-[#a8c0c0] bg-[#daf4f4]">Capture</button>
          <button className="w-10 border border-b-0 border-[#a8c0c0] bg-[#c4dedc]">Cursor</button>
        </nav>
        <Toolbar />
      </div>
      <main className="mt-px flex gap-[6px] border-t border-[#98b0b0] pt-1 pl-1">
        <div className="flex min-w-0 flex-1 flex-col">
          <PacketTable />
          <div className="mt-px h-[3px] border-t border-b border-[#7c9494]" />
          <WavePanel />
        </div>
        <DetailPanel />
      </main>
      <StatusBar />
      <footer className="flex h-5">
        <svg className="h-5 w-[6px]" viewBox="0 0 6 20"><path d="M0 0L6 19.500" stroke="#333" fill="none" /></svg>
        <div className="flex w-[165px] items-center gap-1 border-b border-[#333] bg-[#d4ecec] pl-1">
          <svg className="size-[9px]" viewBox="0 0 9 9"><path d="M1 0h5l2 2v7H1z" fill="#8cc8a0" stroke="#5c9c74" strokeWidth=".6" /></svg>
          Exerciser Analyzer
          <button aria-label="Close tab" className="mr-1 ml-auto text-[10px] font-bold">X</button>
        </div>
        <svg className="h-5 w-[7px]" viewBox="0 0 7 20"><path d="M0 19.500L7 0" stroke="#333" fill="none" /></svg>
        <div className="flex items-center gap-[6px] pl-[10px]">
          <button aria-label="Open file" className="bg-[#dcf0f0]">
            <svg className="size-3" viewBox="0 0 12 12"><rect x="1" y="1" width="9" height="10" fill="#8cc0b0" stroke="#508878" /><path d="M3 3l3 4l2-1l3 4l-2 1l-4-2z" fill="#d8b430" /><path d="M7 5l3 4" stroke="#3c8c3c" /></svg>
          </button>
          <button aria-label="Add report" className="bg-[#dcf0f0]">
            <svg className="size-3" viewBox="0 0 12 12"><rect x="2" y="1" width="9" height="10" fill="#b8dcc4" stroke="#4c8c60" /><path d="M4 3.500h5M4 6h5M6 8.500h3" stroke="#4c8c60" /><path d="M0 9h6M3 6v6" stroke="#f07020" strokeWidth="2" /></svg>
          </button>
          <button aria-label="Add waveform" className="bg-[#dcf0f0]">
            <svg className="size-3" viewBox="0 0 12 12"><path d="M1 11h3V1h3v10h2V1h2v10" fill="none" stroke="#3440a8" /><path d="M0 8.500h5M2.500 6v5" stroke="#f06020" strokeWidth="1.500" /></svg>
          </button>
        </div>
      </footer>
    </section>
  );
}

/* ---------- report window ---------- */

const rowColors = {
  normal: "bg-[#ccffc4]",
  group: "bg-[#dcdcdc] font-bold",
  plain: "bg-white",
  bold: "bg-[#aedcaa] font-bold",
  selected: "font-bold",
};

function TestLine({ row }: { row: TestRow }) {
  const kind = row.kind ?? "normal";
  const noIcon = kind === "group" || kind === "plain";
  return (
    <li className={`flex h-[18px] ${indents[row.level]} ${kind === "selected" ? "bg-[#90b8b6]" : ""}`}>
      <span className="flex w-[14px] shrink-0 items-center justify-center">
        {row.open !== undefined && (
          <button aria-label={row.open ? "Collapse" : "Expand"}><Caret open={row.open} /></button>
        )}
      </span>
      <div className={`flex min-w-0 flex-1 items-center gap-1 whitespace-nowrap ${rowColors[kind]} ${noIcon ? "pl-[2px]" : "pl-[1px]"}`}>
        {!noIcon && <Check dim={kind === "selected"} />}
        {row.text}
      </div>
    </li>
  );
}

function ReportWindow() {
  return (
    <section className="mt-px min-w-0 self-start border border-[#8c8c94] bg-linear-to-b from-[#c0cedf] to-[#d4e2ee] to-[24px] px-[5px] pb-1">
      <header className="flex h-[22px] items-center pr-px text-[#98a4b0]">
        <AppLogo />
        <h2 className="ml-[3px]">ATE Report</h2>
        <div className="ml-auto"><WindowButton label="Close report">{closeGlyph}</WindowButton></div>
      </header>
      <div className="bg-[#c8e5e5] px-1 pt-px">
        <div className="h-[50px] border border-[#b0c8c0] px-1 pt-1">
          <div className="leading-[12px]">Status Display</div>
          <div className="leading-[12px] text-[#209428]">Group 3 Controller Error Detection and Recovery Method Tests: 1.3.2 - Pass</div>
          <div className="flex h-4 items-center justify-center rounded-sm border border-[#7c9c9c] bg-[#90b8b6]">100%</div>
        </div>
        <div className="mt-[5px] flex gap-1">
          <button className="h-3 bg-[#d8eeee] px-px">Expand All</button>
          <button className="h-3 bg-[#d8eeee] px-px">Collapse All</button>
          <button disabled className="h-3 bg-[#d8eeee] px-px text-[#8c9c9c]">Prev Error (Shift+F3)</button>
          <button disabled className="h-3 bg-[#d8eeee] px-px text-[#8c9c9c]">Next Error (F3)</button>
        </div>
        <button className="mt-[5px] block h-3 bg-[#d8eeee] px-px">Export HTML Report</button>

        <div className="mt-[6px] mr-[2px] ml-[2px] border border-[#84a09c] bg-linear-to-b from-[#c8e5e5] to-[#e8f4f4]">
          <div className="flex h-[514px]">
            <div className="min-w-0 flex-1 overflow-hidden">
              <div className="flex h-[14px] items-center bg-linear-to-b from-[#b8d4cc] to-[#9cc4b8] pl-px">Name</div>
              <ul>
                {tests.map((t, i) => (
                  <TestLine key={i} row={t} />
                ))}
              </ul>
            </div>
            <div className="flex w-[9px] shrink-0 flex-col bg-[#98c4b8]">
              <ScrollArrow dir="up" />
              <div className={`h-[334px] ${thumb}`} />
              <div className="mt-auto"><ScrollArrow dir="down" /></div>
            </div>
          </div>
          <div className="flex h-[9px] bg-[#98c4b8]">
            <ScrollArrow dir="left" />
            <div className={`w-[58%] ${thumb}`} />
            <div className="mr-[9px] ml-auto"><ScrollArrow dir="right" /></div>
          </div>
        </div>
        <p className="mt-[6px] pb-1 font-['Liberation_Serif',serif] text-[7px] leading-[8px] text-[#94a8a8]">
          Reproduced portions of the Conformance Test Suite (CTS) for I3C v1.2 and I3C Basic v1.2 are Copyright © 2021-2025 by MIPI Alliance, Inc., all rights reserved, and are used with the permission of MIPI Alliance, Inc.
          <br />
          MIPI and I3C are registered trademarks of MIPI Alliance, Inc. I3C Basic is a trademark of MIPI Alliance, Inc.
        </p>
      </div>
    </section>
  );
}

export default function App() {
  return (
    <div className="grid grid-cols-[minmax(0,5fr)_minmax(0,3fr)] gap-x-[15px] bg-white pr-px pl-[5px] font-['Liberation_Sans',Arial,sans-serif] text-[8px] leading-[10px] text-[#1c2828]">
      <AnalyzerWindow />
      <ReportWindow />
    </div>
  );
}
